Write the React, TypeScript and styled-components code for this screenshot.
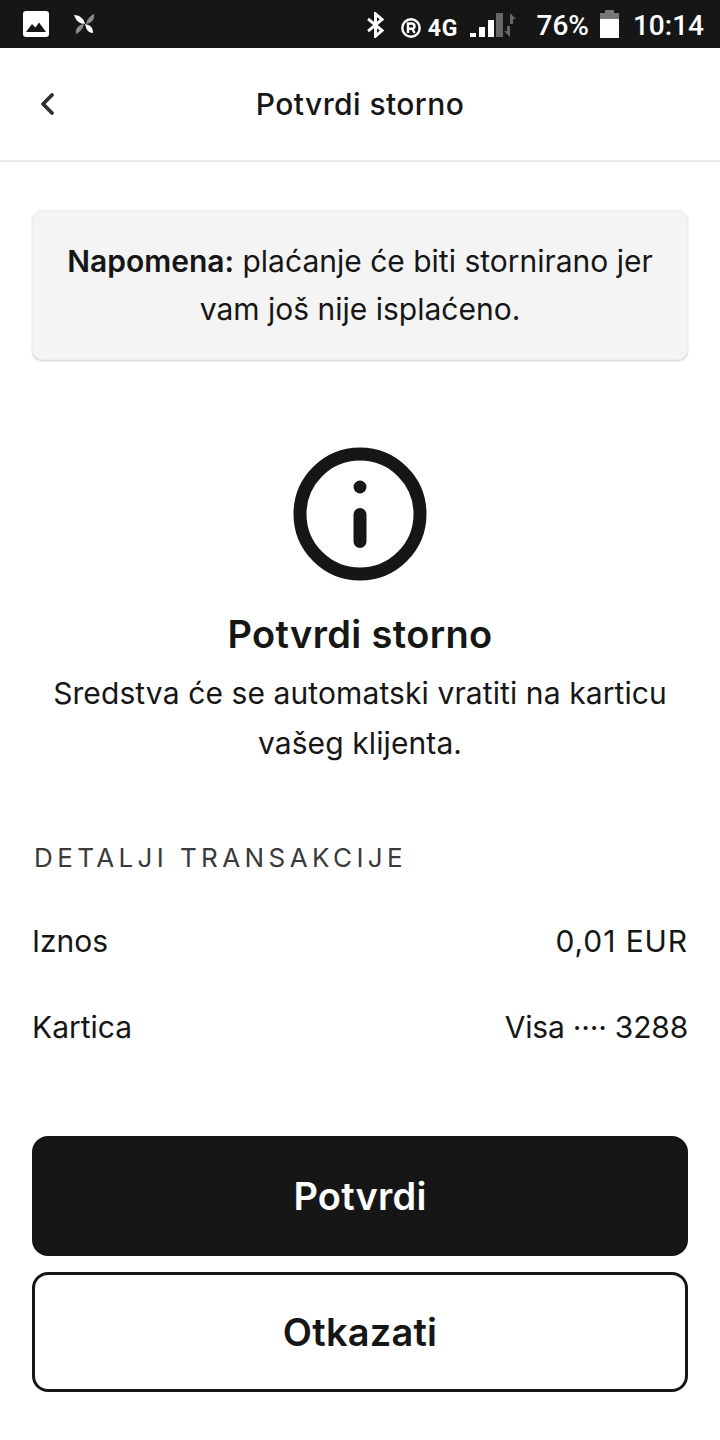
import styled, { createGlobalStyle } from "styled-components";

const GlobalStyle = createGlobalStyle`
  html, body {
    margin: 0;
    padding: 0;
    background: #fff;
  }
  body {
    font-family: "Inter", "Liberation Sans", sans-serif;
    color: #161616;
  }
`;

function ImageIcon() {
  return (
    <svg width="26" height="26" viewBox="0 0 26 26">
      <rect width="26" height="26" rx="3" fill="#fff" />
      <path d="M3 21 L9 13 L12.5 16.5 L16 11.5 L23 21 Z" fill="#161616" />
    </svg>
  );
}

function PinwheelIcon() {
  return (
    <svg width="22" height="20" viewBox="0 0 22 20">
      <path d="M20 0 C21 5 18 9 12 10 C13 5 16 2 20 0 Z" fill="#8a8a8a" />
      <path d="M2 20 C1 15 4 11 10 10 C9 15 6 18 2 20 Z" fill="#8a8a8a" />
      <path d="M0 1 C6 1 10 5 11 10 C6 10 2 7 0 1 Z" fill="#fff" />
      <path d="M19 19 C14 19 12 15 11 10 C16 11 19 13 19 19 Z" fill="#fff" />
    </svg>
  );
}

function BluetoothIcon() {
  return (
    <svg width="19" height="26" viewBox="0 0 20 28" fill="none" stroke="#fff" strokeWidth="3.2">
      <path d="M2 7.5 L17 20 L10 26 V2 L17 8 L2 20.5" />
    </svg>
  );
}

function RoamingIcon() {
  return (
    <svg width="20" height="20" viewBox="0 0 20 20">
      <circle cx="10" cy="10" r="8.7" fill="none" stroke="#fff" strokeWidth="2.4" />
      <path d="M7 15 V5.5 H11 A2.7 2.7 0 0 1 11.5 10.8 L13.5 15 M7 10.8 H11" fill="none" stroke="#fff" strokeWidth="2.4" />
    </svg>
  );
}

function SignalIcon() {
  return (
    <svg width="47" height="28" viewBox="0 0 47 28">
      <rect x="0" y="21" width="6" height="4" fill="#fff" />
      <rect x="9" y="15" width="6" height="10" fill="#fff" />
      <rect x="18" y="8" width="6" height="17" fill="#fff" />
      <rect x="26" y="1" width="7" height="24" fill="#666" />
      <path d="M40 1 L46 7 H43 V12 H40 Z M40 25 L34 19 H37 V14 H40 Z" fill="#666" />
    </svg>
  );
}

function BatteryIcon() {
  return (
    <svg width="19" height="28" viewBox="0 0 19 28">
      <rect x="5" y="0" width="9" height="3" fill="#777" />
      <rect x="0" y="3" width="19" height="6" fill="#777" />
      <rect x="0" y="9" width="19" height="19" fill="#fff" />
    </svg>
  );
}

function BackIcon() {
  return (
    <svg width="16" height="24" viewBox="0 0 16 24" fill="none" stroke="#303030" strokeWidth="3.8" strokeLinecap="round" strokeLinejoin="round">
      <path d="M13 3 L4 12 L13 21" />
    </svg>
  );
}

function InfoIcon() {
  return (
    <svg width="134" height="134" viewBox="0 0 134 134" fill="none">
      <circle cx="67" cy="67" r="60" stroke="#161616" strokeWidth="13" />
      <circle cx="67" cy="40" r="6.5" fill="#161616" />
      <rect x="60.5" y="61" width="13" height="40" rx="6.5" fill="#161616" />
    </svg>
  );
}

export default function App() {
  return (
    <>
      <GlobalStyle />
      <Screen>
        <StatusBar>
          <StatusGroup>
            <ImageIcon />
            <StatusSlot $gap={25}>
              <PinwheelIcon />
            </StatusSlot>
          </StatusGroup>
          <StatusGroup>
            <StatusSlot $gap={0} $top={2}>
              <BluetoothIcon />
            </StatusSlot>
            <StatusSlot $gap={16} $top={8}>
              <RoamingIcon />
            </StatusSlot>
            <StatusSlot $gap={7} $top={9}>
              <Network>4G</Network>
            </StatusSlot>
            <StatusSlot $gap={11} $top={4}>
              <SignalIcon />
            </StatusSlot>
            <StatusSlot $gap={20} $top={3}>
              <StatusText>76%</StatusText>
            </StatusSlot>
            <StatusSlot $gap={11} $top={-1}>
              <BatteryIcon />
            </StatusSlot>
            <StatusSlot $gap={14} $top={3}>
              <StatusText>10:14</StatusText>
            </StatusSlot>
          </StatusGroup>
        </StatusBar>

        <Header>
          <BackButton>
            <BackIcon />
          </BackButton>
          <HeaderTitle>Potvrdi storno</HeaderTitle>
        </Header>

        <Content>
          <Notice>
            <strong>Napomena:</strong> plaćanje će biti stornirano jer vam još nije isplaćeno.
          </Notice>

          <Hero>
            <InfoIcon />
            <HeroTitle>Potvrdi storno</HeroTitle>
            <HeroText>Sredstva će se automatski vratiti na karticu vašeg klijenta.</HeroText>
          </Hero>

          <SectionLabel>DETALJI TRANSAKCIJE</SectionLabel>
          <DetailList>
            <DetailRow>
              <span>Iznos</span>
              <DetailValue $spacing={0.9}>0,01 EUR</DetailValue>
            </DetailRow>
            <DetailRow>
              <span>Kartica</span>
              <DetailValue $spacing={-0.2}>Visa ···· 3288</DetailValue>
            </DetailRow>
          </DetailList>

          <Actions>
            <ActionButton $primary>Potvrdi</ActionButton>
            <ActionButton>Otkazati</ActionButton>
          </Actions>
        </Content>
      </Screen>
    </>
  );
}

const Screen = styled.div`
  width: 720px;
  height: 1440px;
  background: #fff;
  overflow: hidden;
`;

const StatusBar = styled.div`
  height: 48px;
  background: #161616;
  display: flex;
  align-items: center;
  justify-content: space-between;
  padding: 0 16px 0 23px;
`;

const StatusGroup = styled.div`
  display: flex;
  align-items: center;
`;

const StatusSlot = styled.div<{ $gap: number; $top?: number }>`
  display: flex;
  align-items: center;
  margin-left: ${(p) => p.$gap}px;
  margin-top: ${(p) => p.$top ?? 0}px;
`;

const Network = styled.span`
  font-family: "Roboto", sans-serif;
  font-size: 23px;
  font-weight: 700;
  letter-spacing: 1px;
  color: #fff;
`;

const StatusText = styled.span`
  font-family: "Roboto", sans-serif;
  font-size: 28px;
  font-weight: 500;
  color: #fff;
`;

const Header = styled.header`
  height: 112px;
  border-bottom: 2px solid #e8e8e8;
  display: flex;
  align-items: center;
  justify-content: center;
  position: relative;
`;

const BackButton = styled.div`
  position: absolute;
  left: 39px;
  top: 44px;
  display: flex;
`;

const HeaderTitle = styled.h1`
  margin: 0;
  font-size: 30px;
  font-weight: 550;
  letter-spacing: 0.4px;
`;

const Content = styled.main`
  padding: 48px 32px 0;
`;

const Notice = styled.div`
  height: 150px;
  box-sizing: border-box;
  padding: 26px 30px 0;
  background: #f4f4f4;
  border: 1px solid #eeeeee;
  border-radius: 10px;
  box-shadow: 0 1px 2px rgba(0, 0, 0, 0.2);
  font-size: 30px;
  line-height: 48px;
  text-align: center;

  strong {
    font-weight: 600;
  }
`;

const Hero = styled.section`
  margin-top: 87px;
  display: flex;
  flex-direction: column;
  align-items: center;
  text-align: center;
`;

const HeroTitle = styled.h2`
  margin: 29px 0 0;
  font-size: 38px;
  line-height: 48px;
  font-weight: 570;
  letter-spacing: 0.35px;
`;

const HeroText = styled.p`
  margin: 10px 0 0;
  font-size: 30px;
  line-height: 50px;
  letter-spacing: 0.1px;
`;

const SectionLabel = styled.div`
  margin-top: 73px;
  padding-left: 2px;
  font-size: 26px;
  line-height: 34px;
  letter-spacing: 4.4px;
  color: #3a3a3a;
`;

const DetailList = styled.div`
  margin-top: 23px;
`;

const DetailRow = styled.div`
  height: 86px;
  display: flex;
  align-items: center;
  justify-content: space-between;
  font-size: 30px;
`;

const DetailValue = styled.span<{ $spacing: number }>`
  letter-spacing: ${(p) => p.$spacing}px;
`;

const Actions = styled.div`
  margin-top: 66px;
  display: flex;
  flex-direction: column;
  gap: 16px;
`;

const ActionButton = styled.button<{ $primary?: boolean }>`
  height: 120px;
  box-sizing: border-box;
  border-radius: 16px;
  border: 3px solid #161616;
  background: ${(p) => (p.$primary ? "#161616" : "#fff")};
  color: ${(p) => (p.$primary ? "#fff" : "#161616")};
  font-family: inherit;
  font-size: 38px;
  font-weight: 600;
  letter-spacing: 0.2px;
`;
